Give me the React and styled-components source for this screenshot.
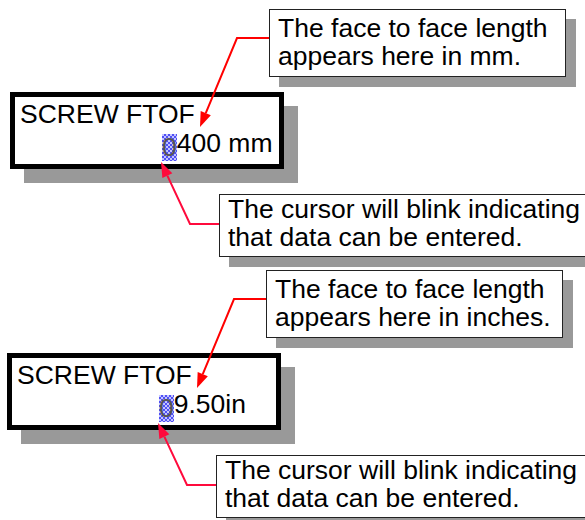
import React from "react";
import styled, { createGlobalStyle } from "styled-components";

const Global = createGlobalStyle`
  html, body {
    margin: 0;
    padding: 0;
    background: #ffffff;
    overflow: hidden;
  }
  body {
    font-family: "Liberation Sans", Arial, sans-serif;
    color: #000;
  }
`;

const Page = styled.main`
  width: 585px;
  height: 520px;
  display: flex;
  flex-direction: column;
`;

const Figure = styled.section`
  position: relative;
  flex: none;
  width: 585px;
  height: 261px;
  margin-left: ${(p) => p.$shift || 0}px;
`;

const Display = styled.div`
  position: absolute;
  left: 10px;
  top: 92px;
  width: 259px;
  height: 64px;
  border: 5px solid #000;
  background: #fff;
  box-shadow: 14px 14px 0 #999999;
  padding: 3px 0 0 5px;
  font-size: 26.5px;
  line-height: 29px;
  display: flex;
  flex-direction: column;
`;

const DisplayLine = styled.div`
  white-space: nowrap;
  padding-left: ${(p) => p.$indent || 0}px;
`;

const Cursor = styled.span`
  display: inline-block;
  height: 27px;
  line-height: 27px;
  vertical-align: -4px;
  color: #555;
  background-color: #6b6bff;
  background-image: repeating-conic-gradient(#5050f5 0 25%, #c4c4ff 0 50%);
  background-size: 4px 4px;
`;

const Callout = styled.div`
  position: absolute;
  left: ${(p) => p.$x}px;
  top: ${(p) => p.$y}px;
  width: ${(p) => p.$w}px;
  border: 1px solid #222;
  background: #fff;
  box-shadow: 10px 10px 0 #999999;
  padding: ${(p) => p.$pt}px 0 ${(p) => p.$pb}px 8px;
  font-size: 26.5px;
  line-height: 28px;
  display: flex;
  flex-direction: column;
`;

const CalloutLine = styled.div`
  white-space: nowrap;
`;

const Arrows = styled.svg`
  position: absolute;
  left: 0;
  top: 0;
  width: 585px;
  height: 261px;
  overflow: visible;
  pointer-events: none;
`;

function head(from, tip, len, hw) {
  const dx = tip[0] - from[0];
  const dy = tip[1] - from[1];
  const l = Math.hypot(dx, dy);
  const ux = dx / l;
  const uy = dy / l;
  const bx = tip[0] - ux * len;
  const by = tip[1] - uy * len;
  const px = -uy * hw;
  const py = ux * hw;
  return {
    base: [bx, by],
    points: `${tip[0]},${tip[1]} ${bx + px},${by + py} ${bx - px},${by - py}`,
  };
}

function Arrow({ start, bend, tip, color }) {
  const h = head(bend, tip, 15, 5.5);
  return (
    <g>
      <polyline
        points={`${start[0]},${start[1]} ${bend[0]},${bend[1]} ${h.base[0]},${h.base[1]}`}
        fill="none"
        stroke={color}
        strokeWidth="2"
        strokeLinejoin="miter"
      />
      <polygon points={h.points} fill={color} />
    </g>
  );
}

function Panel({ shift, value, unitText }) {
  return (
    <Figure $shift={shift}>
      <Callout $x={269} $y={9} $w={287} $pt={4} $pb={6}>
        <CalloutLine>The face to face length</CalloutLine>
        <CalloutLine>appears here in {unitText}.</CalloutLine>
      </Callout>
      <Display>
        <DisplayLine>SCREW FTOF</DisplayLine>
        <DisplayLine $indent={142}>
          <Cursor>0</Cursor>
          {value}
        </DisplayLine>
      </Display>
      <Callout $x={219} $y={194} $w={380} $pt={0} $pb={5}>
        <CalloutLine>The cursor will blink indicating</CalloutLine>
        <CalloutLine>that data can be entered.</CalloutLine>
      </Callout>
      <Arrows viewBox="0 0 585 261">
        <Arrow start={[269, 38]} bend={[237, 38]} tip={[200, 127]} color="#ff0000" />
        <Arrow start={[219, 224]} bend={[190, 224]} tip={[161, 162]} color="#ff0a3c" />
      </Arrows>
    </Figure>
  );
}

export default function App() {
  return (
    <>
      <Global />
      <Page>
        <Panel shift={0} value="400 mm" unitText="mm" />
        <Panel shift={-3} value="9.50in" unitText="inches" />
      </Page>
    </>
  );
}
